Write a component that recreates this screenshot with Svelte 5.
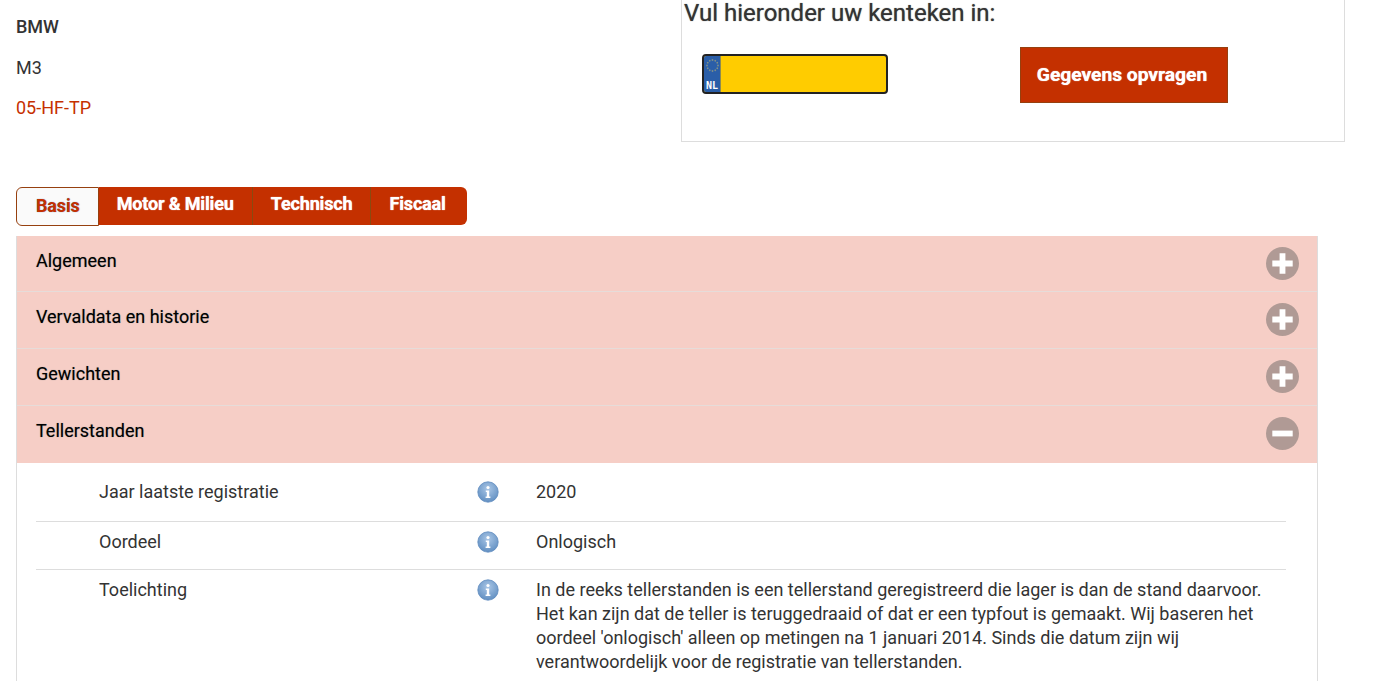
<script>
  const sections = ['Algemeen', 'Vervaldata en historie', 'Gewichten'];
  const rows = [
    { label: 'Jaar laatste registratie', value: ['2020'] },
    { label: 'Oordeel', value: ['Onlogisch'] },
    {
      label: 'Toelichting',
      value: [
        'In de reeks tellerstanden is een tellerstand geregistreerd die lager is dan de stand daarvoor.',
        'Het kan zijn dat de teller is teruggedraaid of dat er een typfout is gemaakt. Wij baseren het',
        "oordeel 'onlogisch' alleen op metingen na 1 januari 2014. Sinds die datum zijn wij",
        'verantwoordelijk voor de registratie van tellerstanden.'
      ]
    }
  ];
  const tabs = ['Motor & Milieu', 'Technisch', 'Fiscaal'];
  const stars = Array.from({ length: 12 }, (_, i) => i * 30);
</script>

<div class="page">
  <div class="top">
    <div class="car">
      <p class="brand">BMW</p>
      <p>M3</p>
      <p class="plate-text">05-HF-TP</p>
    </div>
    <div class="lookup">
      <h2>Vul hieronder uw kenteken in:</h2>
      <div class="lookup-row">
        <div class="plate">
          <div class="eu">
            <svg width="15" height="15" viewBox="0 0 15 15">
              {#each stars as a}
                <circle cx="7.5" cy="2" r="0.9" fill="#7f9088" transform="rotate({a} 7.5 7.5)" />
              {/each}
            </svg>
            <span>NL</span>
          </div>
        </div>
        <button>Gegevens opvragen</button>
      </div>
    </div>
  </div>

  <div class="tabs">
    <div class="tab active">Basis</div>
    {#each tabs as t}
      <div class="tab">{t}</div>
    {/each}
  </div>

  <div class="panel">
    {#each sections as s}
      <div class="head">
        <span>{s}</span>
        <svg class="toggle" width="33" height="33" viewBox="0 0 34 34">
          <circle cx="17" cy="17" r="17" fill="#b09a95" />
          <path d="M6.5 14h7.5V6.5h6V14h7.500v6H20v7.500h-6V20H6.500z" fill="#fff" />
        </svg>
      </div>
    {/each}
    <div class="head open">
      <span>Tellerstanden</span>
      <svg class="toggle" width="33" height="33" viewBox="0 0 34 34">
        <circle cx="17" cy="17" r="17" fill="#b09a95" />
        <rect x="6.500" y="14" width="21" height="6" fill="#fff" />
      </svg>
    </div>
    <div class="body">
      {#each rows as r}
        <div class="row">
          <div class="label">{r.label}</div>
          <div class="info">
            <svg width="22" height="22" viewBox="0 0 22 22">
              <defs>
                <radialGradient id="ball" cx="50%" cy="35%" r="70%">
                  <stop offset="0" stop-color="#a9c6e6" />
                  <stop offset="1" stop-color="#5c8bbf" />
                </radialGradient>
              </defs>
              <circle cx="11" cy="11" r="10.200" fill="url(#ball)" stroke="#5f8cbf" stroke-width="0.800" />
              <circle cx="11" cy="6.500" r="1.600" fill="#fff" />
              <path d="M8.800 9.500h3.400v6h1.200v1.500H8.600v-1.500h1.200v-4.500h-1z" fill="#fff" />
            </svg>
          </div>
          <div class="value">
            {#each r.value as line}
              <div>{line}</div>
            {/each}
          </div>
        </div>
      {/each}
    </div>
  </div>
</div>

<style>
  :global(body) {
    font-family: Roboto, sans-serif;
    font-size: 18px;
    color: #333;
    background: #fff;
    overflow: hidden;
  }

  .page {
    padding-left: 16px;
    height: 681px;
    overflow: hidden;
  }

  .top {
    display: flex;
    height: 187px;
  }

  .car {
    width: 665px;
    padding-top: 16px;
  }

  .car p {
    margin: 0 0 19px;
    line-height: 21.500px;
  }

  .brand {
    font-weight: 500;
  }

  .plate-text {
    color: #c63000;
  }

  .lookup {
    width: 664px;
    height: 142px;
    box-sizing: border-box;
    border: 1px solid #ddd;
    border-top: none;
  }

  h2 {
    margin: 0 0 0 2px;
    font-size: 24px;
    font-weight: 400;
    line-height: 27px;
    text-shadow: 0 0 1px #666;
  }

  .lookup-row {
    display: flex;
    align-items: flex-start;
    margin: 20px 0 0 20px;
  }

  .plate {
    width: 186px;
    height: 40px;
    margin-top: 7px;
    box-sizing: border-box;
    border: 2px solid #222;
    border-radius: 4px;
    background: #ffcc00;
    overflow: hidden;
  }

  .eu {
    width: 17px;
    height: 36px;
    background: #2a5ea8;
    border-right: 1px solid #8d8a50;
    display: flex;
    flex-direction: column;
    align-items: center;
    justify-content: space-between;
    padding-top: 2px;
    box-sizing: border-box;
  }

  .eu span {
    font-family: 'DejaVu Sans Mono', monospace;
    font-size: 10px;
    font-weight: 700;
    line-height: 13px;
    color: #fff;
  }

  button {
    width: 208px;
    height: 56px;
    margin-left: 132px;
    padding: 0 4px 2px 0;
    background: #c43000;
    border: 1px solid #96400f;
    color: #fff;
    font-family: Roboto, sans-serif;
    font-size: 19.200px;
    font-weight: 700;
    text-shadow: 0 0 1px #fff;
  }

  .tabs {
    display: inline-flex;
    align-items: flex-start;
    height: 49px;
    vertical-align: top;
  }

  .tab {
    height: 38px;
    box-sizing: border-box;
    padding: 0 18px;
    line-height: 34px;
    background: #c43000;
    border-right: 1px solid #8a4a10;
    color: #fff;
    font-weight: 700;
    letter-spacing: -0.150px;
    text-shadow: 0 0 1px #fff;
  }

  .tab:last-child {
    border-right: none;
    border-radius: 0 6px 6px 0;
    padding-right: 21px;
  }

  .tab.active {
    height: 39px;
    padding: 0 18px 0 19px;
    line-height: 36px;
    background: #fafafa;
    color: #c43000;
    border: 1px solid #96400f;
    border-radius: 6px 0 0 6px;
    text-shadow: 0 0 1px #5a7fb0;
  }

  .panel {
    width: 1302px;
    box-sizing: border-box;
    border: 1px solid #ddd;
    border-top: none;
  }

  .head {
    display: flex;
    justify-content: space-between;
    align-items: center;
    height: 57px;
    box-sizing: border-box;
    padding: 0 18px 1px 19px;
    background: #f6cec6;
    border-bottom: 1px solid #e6dcd9;
    color: #000;
  }

  .head:first-child {
    height: 56px;
    padding-bottom: 0;
  }

  .head span {
    margin-top: -6px;
    text-shadow: 0 0 1px #888;
  }

  .head.open {
    border-bottom: none;
    padding-bottom: 2px;
  }

  .body {
    padding: 0 31px 0 19px;
  }

  .row {
    display: flex;
    padding: 8px 0 15px;
    border-bottom: 1px solid #ddd;
    line-height: 24px;
  }

  .row:first-child {
    padding: 17px 0 17px;
  }

  .row:last-child {
    border-bottom: none;
  }

  .label {
    width: 379px;
    padding-left: 63px;
    box-sizing: border-box;
  }

  .info {
    width: 121px;
  }

  .info svg {
    display: block;
    margin: 1px 0 0 62px;
  }

  .value {
    white-space: nowrap;
  }
</style>
